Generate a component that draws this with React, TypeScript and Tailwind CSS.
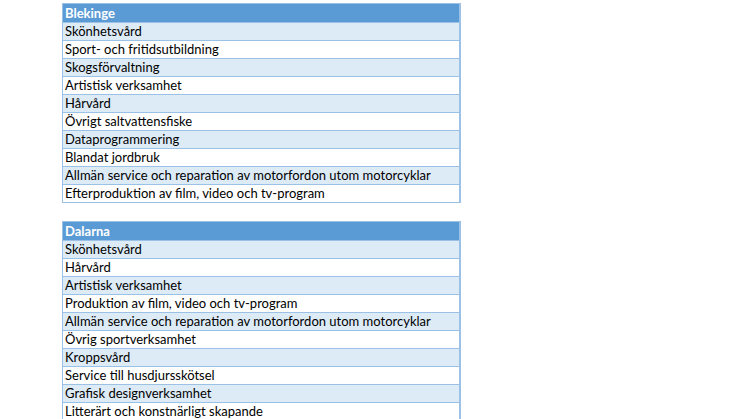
const regions = [
  {
    name: "Blekinge",
    rows: [
      "Skönhetsvård",
      "Sport- och fritidsutbildning",
      "Skogsförvaltning",
      "Artistisk verksamhet",
      "Hårvård",
      "Övrigt saltvattensfiske",
      "Dataprogrammering",
      "Blandat jordbruk",
      "Allmän service och reparation av motorfordon utom motorcyklar",
      "Efterproduktion av film, video och tv-program",
    ],
  },
  {
    name: "Dalarna",
    rows: [
      "Skönhetsvård",
      "Hårvård",
      "Artistisk verksamhet",
      "Produktion av film, video och tv-program",
      "Allmän service och reparation av motorfordon utom motorcyklar",
      "Övrig sportverksamhet",
      "Kroppsvård",
      "Service till husdjursskötsel",
      "Grafisk designverksamhet",
      "Litterärt och konstnärligt skapande",
    ],
  },
];

const RegionTable = ({ name, rows }: { name: string; rows: string[] }) => (
  <div className="w-[399px] border border-r-2 border-[#9bc2e6]">
    <div className="h-[18px] bg-[#5b9bd5] pl-[2px] text-[13px] font-bold leading-[18px] text-white">
      {name}
    </div>
    {rows.map((row, i) => (
      <div
        key={row + i}
        className={
          "h-[18px] border-t border-[#9bc2e6] pl-[2px] text-[13px] leading-[17px] text-black " +
          (i % 2 === 0 ? "bg-[#ddebf7]" : "bg-white")
        }
      >
        {row}
      </div>
    ))}
  </div>
);

export default function App() {
  return (
    <div
      className="min-h-screen overflow-hidden bg-white pl-[62px] pt-[3px]"
      style={{ fontFamily: "Lato, 'Open Sans', sans-serif" }}
    >
      <div className="flex flex-col gap-[18px]">
        {regions.map((r) => (
          <RegionTable key={r.name} name={r.name} rows={r.rows} />
        ))}
      </div>
    </div>
  );
}
